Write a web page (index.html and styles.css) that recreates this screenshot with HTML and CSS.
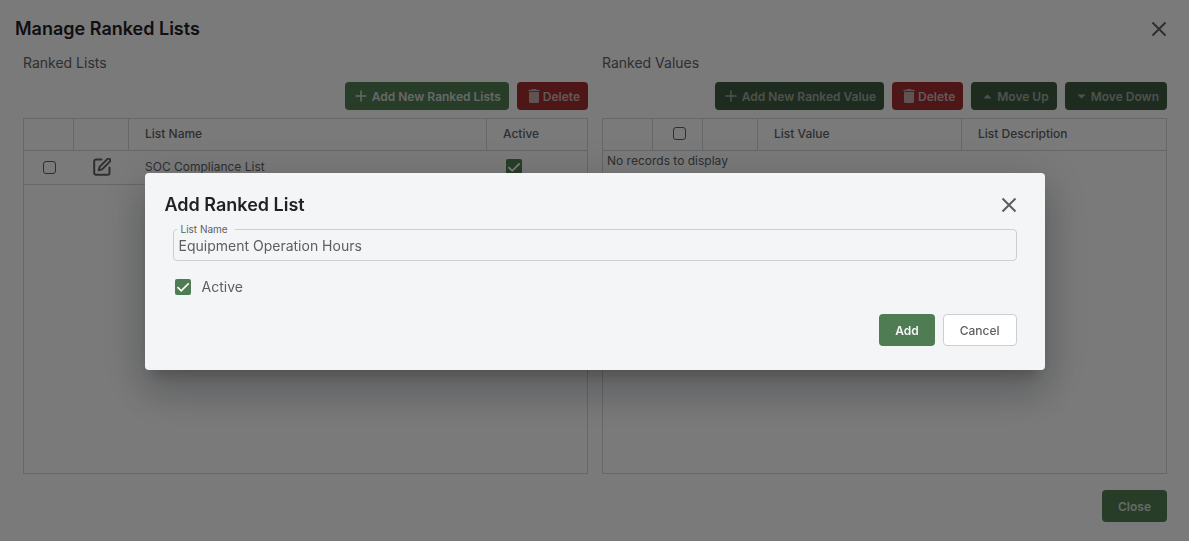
FILE: index.html
```html
<!DOCTYPE html>
<html lang="en">
<head>
<meta charset="utf-8">
<meta name="viewport" content="width=device-width, initial-scale=1">
<title>Manage Ranked Lists</title>
<link rel="stylesheet" href="styles.css">
</head>
<body>
<main class="page">
  <header class="page-head">
    <h1 class="title">Manage Ranked Lists</h1>
    <button class="icon-btn" type="button" aria-label="Close page"><svg class="icon-close" viewBox="0 0 16 16"><path d="M1.5 1.5l13 13M14.5 1.5l-13 13"/></svg></button>
  </header>
  <div class="panels">
    <section class="panel">
      <h2 class="subtitle">Ranked Lists</h2>
      <div class="toolbar">
        <button class="btn green" type="button"><svg class="icon-plus" viewBox="0 0 12 12"><path d="M6 .5v11M.5 6h11"/></svg>Add New Ranked Lists</button>
        <button class="btn red" type="button"><svg class="icon-trash" viewBox="0 0 12 14"><path d="M1 3h10v9.500a1.500 1.500 0 0 1-1.500 1.500h-7A1.500 1.500 0 0 1 1 12.500zM.5.8h3L4.300 0h3.400l.8.8h3v1.400H.5z"/></svg>Delete</button>
      </div>
      <div class="table-box">
        <table class="table">
          <colgroup><col class="col-check"><col class="col-edit"><col><col class="col-active"></colgroup>
          <thead><tr><th></th><th></th><th>List Name</th><th>Active</th></tr></thead>
          <tbody><tr>
            <td class="center"><input class="check" type="checkbox" aria-label="Select row"></td>
            <td class="center"><button class="icon-btn" type="button" aria-label="Edit"><svg class="icon-edit" viewBox="0 0 18 18"><path d="M8.500 1.500H3A1.800 1.800 0 0 0 1.200 3.300V15A1.800 1.800 0 0 0 3 16.800h11.700a1.800 1.800 0 0 0 1.800-1.800V9.500M14.300 1.100a1.700 1.700 0 0 1 2.500 2.500l-7.700 7.800-3.400.8.900-3.300z"/></svg></button></td>
            <td>SOC Compliance List</td>
            <td><input class="tick tick-cell" type="checkbox" aria-label="Active list" checked></td>
          </tr></tbody>
        </table>
      </div>
    </section>
    <section class="panel">
      <h2 class="subtitle">Ranked Values</h2>
      <div class="toolbar">
        <button class="btn green dim" type="button"><svg class="icon-plus" viewBox="0 0 12 12"><path d="M6 .5v11M.5 6h11"/></svg>Add New Ranked Value</button>
        <button class="btn red" type="button"><svg class="icon-trash" viewBox="0 0 12 14"><path d="M1 3h10v9.500a1.500 1.500 0 0 1-1.500 1.500h-7A1.500 1.500 0 0 1 1 12.500zM.5.8h3L4.300 0h3.400l.8.8h3v1.400H.5z"/></svg>Delete</button>
        <button class="btn green dim arrow" type="button"><svg class="icon-arrow" viewBox="0 0 10 6"><path d="M0 5.500l5-5 5 5z"/></svg>Move Up</button>
        <button class="btn green dim arrow" type="button"><svg class="icon-arrow" viewBox="0 0 10 6"><path d="M0 .5l5 5 5-5z"/></svg>Move Down</button>
      </div>
      <div class="table-box">
        <table class="table">
          <colgroup><col class="col-check"><col class="col-check"><col class="col-edit"><col><col></colgroup>
          <thead><tr><th></th><th class="center"><input class="check" type="checkbox" aria-label="Select all"></th><th></th><th>List Value</th><th>List Description</th></tr></thead>
        </table>
        <p class="empty">No records to display</p>
      </div>
    </section>
  </div>
  <footer class="page-foot"><button class="btn green large" type="button">Close</button></footer>
</main>
<div class="backdrop">
  <form class="dialog" role="dialog" aria-modal="true" aria-labelledby="dialog-title">
    <header class="dialog-head">
      <h2 class="title" id="dialog-title">Add Ranked List</h2>
      <button class="icon-btn" type="button" aria-label="Close dialog"><svg class="icon-close" viewBox="0 0 16 16"><path d="M1.500 1.500l13 13M14.500 1.500l-13 13"/></svg></button>
    </header>
    <div class="field">
      <label class="field-label" for="list-name">List Name</label>
      <input class="field-input" id="list-name" type="text" value="Equipment Operation Hours">
    </div>
    <div class="option"><input class="tick" id="active" type="checkbox" checked><label for="active">Active</label></div>
    <div class="dialog-foot">
      <button class="btn green large" type="button">Add</button>
      <button class="btn outline large" type="button">Cancel</button>
    </div>
  </form>
</div>
</body>
</html>
```
FILE: styles.css
```css
* { box-sizing: border-box; }

body {
  margin: 0;
  background: #f4f5f7;
  color: #5c5e60;
  font-family: Inter, "Liberation Sans", sans-serif;
  font-size: 12px;
}

button, input { font: inherit; color: inherit; }
h1, h2, p { margin: 0; }
svg { display: block; flex: none; }

.page {
  display: flex;
  flex-direction: column;
  min-height: 100vh;
  padding: 16px 22px 19px 23px;
}

.page-head {
  display: flex;
  align-items: center;
  justify-content: space-between;
  height: 26px;
  margin-left: -8px;
}

.title {
  color: #1e2022;
  font-size: 18px;
  line-height: 26px;
  font-weight: 600;
}

.icon-btn {
  display: inline-flex;
  padding: 0;
  border: 0;
  background: none;
  color: #5c5e60;
  vertical-align: middle;
}

.icon-close, .icon-edit, .icon-plus { fill: none; stroke: currentColor; }
.icon-close { width: 16px; height: 16px; stroke-width: 2; }
.icon-edit { width: 18px; height: 18px; stroke-width: 2; stroke-linecap: round; stroke-linejoin: round; }
.icon-plus { width: 12px; height: 12px; margin-right: 5px; stroke-width: 1.5; }
.icon-trash { width: 12px; height: 14px; margin-right: 3px; fill: currentColor; opacity: 0.9; }
.icon-arrow { width: 9px; height: 5px; margin-right: 5px; fill: currentColor; }

.panels {
  display: grid;
  grid-template-columns: 1fr 1fr;
  gap: 14px;
  flex: 1;
}

.panel { display: flex; flex-direction: column; min-width: 0; }

.subtitle {
  margin: 11px 0 9px;
  font-size: 14px;
  line-height: 20px;
  font-weight: 400;
}

.toolbar {
  display: flex;
  justify-content: flex-end;
  gap: 8px;
  margin-bottom: 8px;
}

.btn {
  display: inline-flex;
  align-items: center;
  justify-content: center;
  height: 28px;
  padding: 0 8px 0 10px;
  border: 0;
  border-radius: 4px;
  font-weight: 600;
  white-space: nowrap;
}
.btn.red { padding-left: 11px; }
.green { background: #507c54; color: #f4f5f7; }
.toolbar .green, .page-foot .green { background: #4e7a51; color: #cdd2ce; }
.toolbar .red { background: #9c2c2c; color: #c4b4b5; }
.toolbar .dim { background: #3a593c; color: #9ba49d; }
.toolbar .arrow { padding-left: 12px; }
.btn.large { height: 32px; padding: 0 16px; }
.outline {
  border: 1px solid #ccced0;
  background: #fff;
  color: #5c5e60;
  font-weight: 500;
}

.table-box {
  flex: 1;
  border: 1px solid #ccced0;
}

.table {
  width: 100%;
  border-spacing: 0;
  table-layout: fixed;
}
.col-check { width: 50px; }
.col-edit { width: 55px; }
.col-active { width: 100px; }

th, td {
  padding: 0 16px 2px;
  border-bottom: 1px solid #ccced0;
  text-align: left;
}
th { height: 32px; border-right: 1px solid #ccced0; font-weight: 500; }
th:last-child { border-right: 0; }
td { height: 34px; }
td.center { padding: 0 0 2px; text-align: center; }
th.center { padding: 0 0 4px 4px; text-align: center; }

.empty { padding: 0 4px; line-height: 20px; }

.check, .tick {
  display: inline-block;
  margin: 0;
  appearance: none;
  vertical-align: middle;
}
.check {
  width: 13px;
  height: 13px;
  border: 1px solid #5c5e60;
  border-radius: 3px;
}
.tick {
  width: 16px;
  height: 16px;
  border-radius: 2px;
  background: #507c54 url("data:image/svg+xml,%3Csvg xmlns='http://www.w3.org/2000/svg' viewBox='0 0 16 16'%3E%3Cpath d='M2.500 8.200l3.700 3.700 7.500-7.500' fill='none' stroke='white' stroke-width='1.700'/%3E%3C/svg%3E");
}
.tick-cell { margin-left: 3px; }

.page-foot {
  display: flex;
  justify-content: flex-end;
  padding-top: 16px;
}

.backdrop {
  position: fixed;
  inset: 0;
  display: flex;
  align-items: center;
  justify-content: center;
  padding: 34px 32px 32px;
  background: rgba(0, 0, 0, 0.5);
}

.dialog {
  width: 100%;
  max-width: 900px;
  padding: 16px 28px 24px;
  border-radius: 4px;
  background: #f4f5f7;
  box-shadow: 0 11px 15px -7px rgba(0, 0, 0, 0.2), 0 24px 38px 3px rgba(0, 0, 0, 0.14), 0 9px 46px 8px rgba(0, 0, 0, 0.12);
}

.dialog-head {
  display: flex;
  align-items: center;
  justify-content: space-between;
  height: 32px;
  margin: 0 0 8px -8px;
}

.field { position: relative; }
.field-label {
  position: absolute;
  top: -7px;
  left: 4px;
  padding: 0 7px 0 4px;
  background: #f4f5f7;
  font-size: 10px;
  line-height: 14px;
}
.field-input {
  display: block;
  width: 100%;
  height: 32px;
  padding: 0 5px;
  border: 1px solid #ccced0;
  border-radius: 4px;
  background: none;
  font-size: 14px;
}

.option {
  display: flex;
  align-items: center;
  gap: 11px;
  margin: 16px 0 17px;
  padding-left: 2px;
  font-size: 14px;
  line-height: 20px;
}

.dialog-foot {
  display: flex;
  justify-content: flex-end;
  gap: 8px;
}
```
